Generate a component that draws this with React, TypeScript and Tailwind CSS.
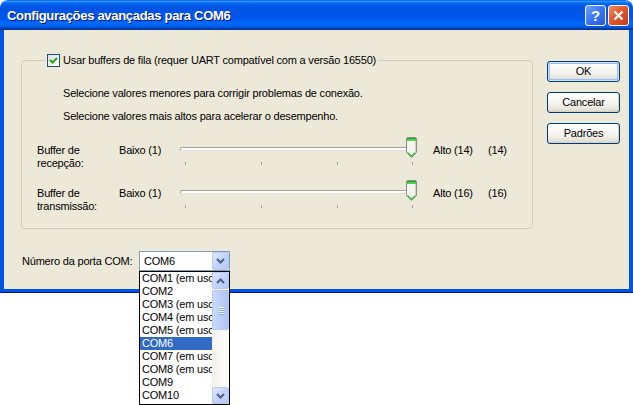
import React from 'react';

const font = "font-['Liberation_Sans',Arial,sans-serif]";

function Chevron({ up = false }: { up?: boolean }) {
  return (
    <svg width="9" height="6" viewBox="0 0 9 6">
      <path d={up ? 'M1 5 L4.5 1.5 L8 5' : 'M1 1 L4.5 4.5 L8 1'} fill="none" stroke="#4D6185" strokeWidth="2" />
    </svg>
  );
}

function ScrollBtn({ up = false }: { up?: boolean }) {
  return (
    <div className="h-[17px] w-[17px] flex items-center justify-center rounded-[2px] border border-[#B4C8F6] bg-[linear-gradient(135deg,#E1EAFE_0%,#C3D3FD_50%,#B6CAF7_100%)]">
      <Chevron up={up} />
    </div>
  );
}

function Thumb() {
  return (
    <svg width="11" height="21" viewBox="0 0 11 21" className="absolute left-[226px] top-0">
      <path d="M0.5 2 Q0.5 0.5 2 0.5 H9 Q10.5 0.5 10.5 2 V15.5 L5.5 20.5 L0.5 15.5 Z" fill="#F4F3EE" stroke="#8C8E8C" />
      <rect x="1" y="1" width="9" height="1" fill="#1EA51E" />
      <rect x="1" y="2" width="9" height="2" fill="#4FD44F" />
      <rect x="9" y="4" width="1" height="11" fill="#D4D2C8" />
      <path d="M1.5 15.5 L5.5 19.3 L9.5 15.5" fill="none" stroke="#3CBF3C" strokeWidth="1.2" />
    </svg>
  );
}

function SliderRow({ label1, label2, max }: { label1: string; label2: string; max: string }) {
  return (
    <div className="flex items-start h-[28px]">
      <div className="w-[82px] mt-[7px] leading-[13px]">
        <div>{label1}</div>
        <div>{label2}</div>
      </div>
      <div className="w-[61px] mt-[7px] leading-[13px]">Baixo (1)</div>
      <div className="relative w-[240px] h-[28px]">
        <div className="absolute left-0 top-[10px] w-[236px] h-[4px] rounded-l-[2px] border-t border-l border-[#A3A29C] bg-white border-b border-b-[#E4E2D8]" />
        {[5, 81, 157, 232].map((x) => (
          <div key={x} className="absolute top-[25px] w-px h-[3px] bg-[#A4A4A4]" style={{ left: x }} />
        ))}
        <Thumb />
      </div>
      <div className="ml-[13px] w-[55px] mt-[7px] leading-[13px]">Alto ({max})</div>
      <div className="mt-[7px] leading-[13px]">({max})</div>
    </div>
  );
}

function XpButton({ label, primary = false }: { label: string; primary?: boolean }) {
  return (
    <div
      className={
        'w-[73px] h-[21px] flex items-center justify-center rounded-[3px] border border-[#003C74] text-[11px] text-black bg-[linear-gradient(180deg,#FFFFFF_0%,#F5F4EF_55%,#E3E0D6_90%,#D6D0C5_100%)] ' +
        (primary ? 'shadow-[inset_0_0_0_1px_#CEE3FF,inset_0_0_0_2px_#9DBBF3]' : 'shadow-[inset_-1px_-1px_0_0_#D8D2C6]')
      }
    >
      {label}
    </div>
  );
}

const ports = [
  'COM1 (em uso)',
  'COM2',
  'COM3 (em uso)',
  'COM4 (em uso)',
  'COM5 (em uso)',
  'COM6',
  'COM7 (em uso)',
  'COM8 (em uso)',
  'COM9',
  'COM10',
];

export default function App() {
  return (
    <div className={`w-[633px] h-[405px] bg-white overflow-hidden ${font} text-[11px] tracking-[-0.2px] text-black`}>
      <div className="w-[633px] flex flex-col">
        {/* Title bar */}
        <div className="h-[30px] rounded-t-[8px] flex items-center pl-[7px] pr-[4px] bg-[linear-gradient(180deg,#0058EE_0%,#3593FF_4%,#288EFF_6%,#127DFF_8%,#036FFC_10%,#0262EE_14%,#0057E5_20%,#0054E3_24%,#0055EB_56%,#005BF5_66%,#026AFE_76%,#0062EF_86%,#0052D6_92%,#0040AB_94%,#003092_100%)]">
          <span className="flex-1 text-white font-bold text-[13px] tracking-[-0.3px] mt-[1px] [text-shadow:1px_1px_0_#0A1883]">
            Configurações avançadas para COM6
          </span>
          <div className="flex gap-[2px]">
            <div className="w-[21px] h-[21px] rounded-[3px] border border-white flex items-center justify-center bg-[linear-gradient(135deg,#6FA2FF_0%,#3A76F4_50%,#2558DC_100%)] text-white font-bold text-[15px] leading-none">
              ?
            </div>
            <div className="w-[21px] h-[21px] rounded-[3px] border border-white flex items-center justify-center bg-[linear-gradient(135deg,#F08A6A_0%,#E2572D_45%,#C63E17_100%)]">
              <svg width="11" height="11" viewBox="0 0 11 11">
                <path d="M1.5 1.5 L9.5 9.5 M9.5 1.5 L1.5 9.5" stroke="white" strokeWidth="2.2" />
              </svg>
            </div>
          </div>
        </div>

        {/* Client area */}
        <div className="h-[262px] border-l-[4px] border-r-[4px] border-b-[3px] border-[#0054E3] shadow-[0_1px_0_0_#00138C] bg-[#ECE9D8] flex items-start">
          <div className="pl-[17px] pt-[24px] flex flex-col">
            <fieldset className="w-[512px] border border-[#D0D0BF] rounded-[4px] pb-[20px]">
              <legend className="ml-[23px] px-[2px]">
                <div className="flex items-center gap-[3px] leading-[13px]">
                  <div className="w-[13px] h-[13px] border border-[#1C5180] bg-[linear-gradient(135deg,#DCDCD7_0%,#FFFFFF_100%)] flex items-center justify-center">
                    <svg width="9" height="9" viewBox="0 0 9 9">
                      <path d="M1 4 L3.5 6.5 L8 2" fill="none" stroke="#21A121" strokeWidth="2" />
                    </svg>
                  </div>
                  <span>Usar buffers de fila (requer UART compatível com a versão 16550)</span>
                </div>
              </legend>
              <div className="pl-[15px] flex flex-col">
                <div className="ml-[26px] mt-[20px] leading-[13px]">Selecione valores menores para corrigir problemas de conexão.</div>
                <div className="ml-[26px] mt-[10px] leading-[13px]">Selecione valores mais altos para acelerar o desempenho.</div>
                <div className="mt-[14px]">
                  <SliderRow label1="Buffer de" label2="recepção:" max="14" />
                </div>
                <div className="mt-[15px]">
                  <SliderRow label1="Buffer de" label2="transmissão:" max="16" />
                </div>
              </div>
            </fieldset>

            <div className="mt-[22px] flex items-center">
              <div className="w-[118px] pl-[1px]">Número da porta COM:</div>
              <div className="relative w-[91px] h-[20px] border border-[#7F9DB9] bg-white flex items-center">
                <span className="flex-1 pl-[4px]">COM6</span>
                <div className="w-[17px] h-[18px] flex items-center justify-center rounded-[2px] border border-[#B4C8F6] bg-[linear-gradient(135deg,#E1EAFE_0%,#C3D3FD_50%,#B6CAF7_100%)]">
                  <Chevron />
                </div>
                {/* Open list */}
                <div className="absolute left-[-1px] top-[19px] w-[91px] h-[134px] border border-black bg-white flex">
                  <div className="flex-1 overflow-hidden flex flex-col">
                    {ports.map((p) => (
                      <div
                        key={p}
                        className={
                          'h-[13px] leading-[13px] pl-[2px] whitespace-nowrap ' +
                          (p === 'COM6' ? 'bg-[#316AC5] text-white' : '')
                        }
                      >
                        {p}
                      </div>
                    ))}
                  </div>
                  <div className="w-[17px] flex flex-col bg-[linear-gradient(90deg,#F3F1EC_0%,#FEFEFB_100%)]">
                    <ScrollBtn up />
                    <div className="flex-1 pt-[1px]">
                      <div className="h-[40px] rounded-[2px] border border-[#B4C8F6] bg-[linear-gradient(90deg,#C9DAFD_0%,#BACDF9_60%,#AFC4F4_100%)] flex flex-col items-center justify-center gap-[1px]">
                        {[0, 1, 2, 3].map((i) => (
                          <div key={i} className="w-[6px] h-px bg-[#EEF4FE] shadow-[0_1px_0_0_#8CB0F8]" />
                        ))}
                      </div>
                    </div>
                    <ScrollBtn />
                  </div>
                </div>
              </div>
            </div>
          </div>

          <div className="ml-[14px] pt-[31px] flex flex-col gap-[10px]">
            <XpButton label="OK" primary />
            <XpButton label="Cancelar" />
            <XpButton label="Padrões" />
          </div>
        </div>
      </div>
    </div>
  );
}
